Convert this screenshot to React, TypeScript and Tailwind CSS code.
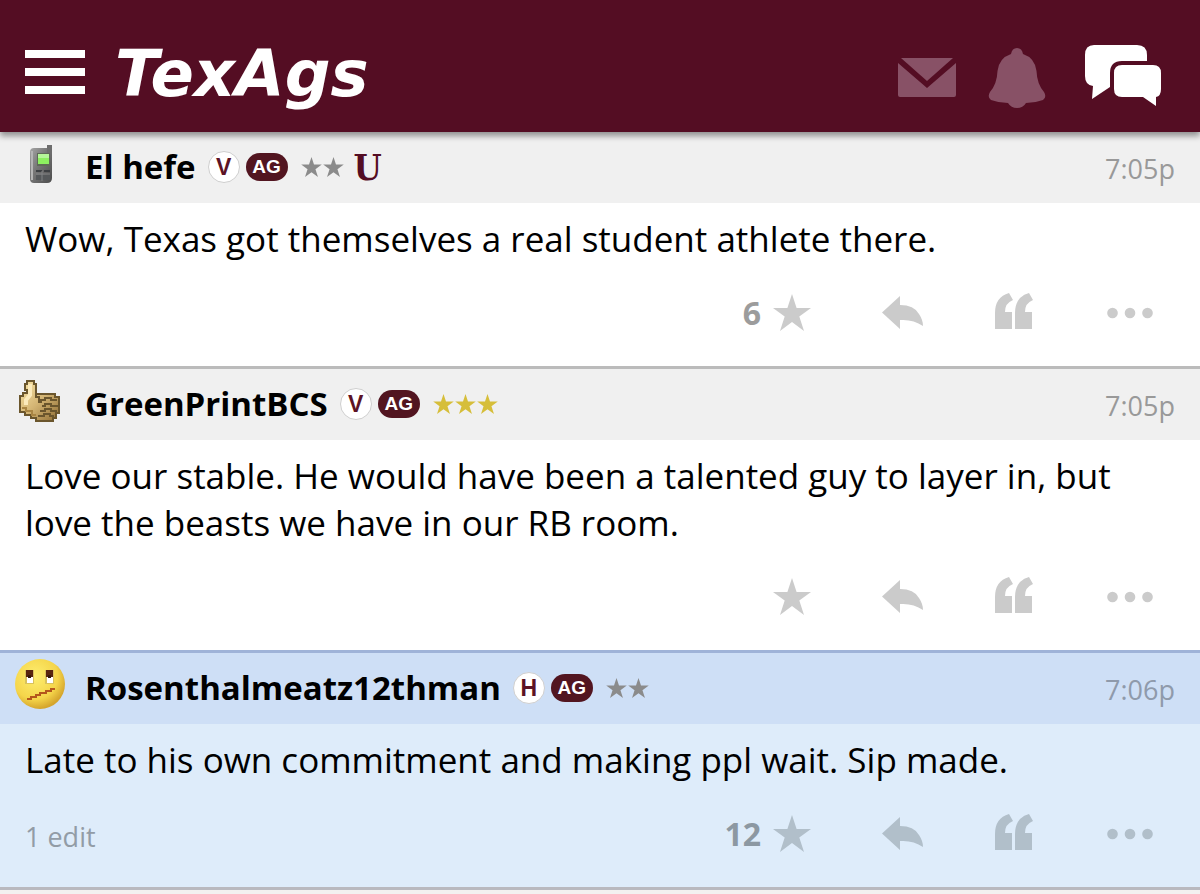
import { ReactNode } from "react";

interface PostProps {
    name: string;
    avatar: ReactNode;
    sport: string;
    stars: number;
    gold?: boolean;
    team?: boolean;
    time: string;
    text: string;
    likes?: number;
    edits?: string;
    highlighted?: boolean;
}

const PhoneIcon = () => (
    <svg width="52" height="52" viewBox="0 0 52 52" aria-hidden="true">
        <defs>
            <linearGradient id="phone" x1="0" x2="1" y1="0" y2="1">
                <stop offset="0" stopColor="#aaaaaa" />
                <stop offset="0.45" stopColor="#777777" />
                <stop offset="1" stopColor="#4c4c4c" />
            </linearGradient>
        </defs>
        <path d="M33 8h5v33q0 5-5 5H20q-4 0-4-4V15q0-4 4-4h13z" fill="url(#phone)" />
        <path d="M33 8h5v9h-5z" fill="#6d6d6d" />
        <path d="M18 14v29" stroke="#b5b5b5" strokeWidth="2" />
        <path d="M23 16h13v13H23z" fill="#5f6a58" />
        <path d="M24 17h11v10H24z" fill="#8df060" />
        <path d="M24 17h11v4H24z" fill="#b5f799" />
        <path d="M22 33h6v2h-6zM30 33h6v2h-6z" fill="#3d4043" />
        <path d="M22 38h14v5H22z" fill="#55585a" />
        <path d="M22 37h14M28 34v10" stroke="#808284" />
    </svg>
);

const ThumbIcon = () => (
    <svg width="52" height="52" viewBox="0 0 52 52" aria-hidden="true">
        <defs>
            <linearGradient id="thumb" x1="0" x2="1" y1="0" y2="1">
                <stop offset="0" stopColor="#fbe7a9" />
                <stop offset="0.5" stopColor="#d3b473" />
                <stop offset="1" stopColor="#8e6c33" />
            </linearGradient>
        </defs>
        <path d="M13 7h7v3h2v10h19v3h4v16h-3v5h-3v3H22v-3h-5v-3h-6v-3H6V22h3v-3h4v-3h-2v-6h2z" fill="url(#thumb)" stroke="#6b562d" strokeWidth="2" />
        <path d="M22 20v3h3v5h3M25 26h6v-2h6v2h6M28 32h3v-2h6v2h7M26 37h5v-2h6v2h6M24 42h6v-2h6v2h4" fill="none" stroke="#6b562d" strokeWidth="2" />
        <path d="M16 10v11l-4 5v5" fill="none" stroke="#fbeabb" strokeWidth="4" />
        <path d="M8 34h4v3h6v4h4" fill="none" stroke="#a98543" strokeWidth="2" />
    </svg>
);

const FaceIcon = () => (
    <svg width="52" height="52" viewBox="0 0 52 52" aria-hidden="true">
        <defs>
            <radialGradient id="face" cx="0.4" cy="0.35" r="0.65">
                <stop offset="0" stopColor="#fdee70" />
                <stop offset="0.7" stopColor="#f5d54a" />
                <stop offset="1" stopColor="#d5a52d" />
            </radialGradient>
        </defs>
        <circle cx="26" cy="26" r="25" fill="url(#face)" />
        <path d="M11 12h9v14h-9zM31 12h9v14h-9z" fill="#d9c25c" />
        <path d="M12 12h7v7h-7zM32 12h7v7h-7z" fill="#57240f" />
        <path d="M13 19h6v6h-6zM33 19h6v6h-6z" fill="#ffffff" />
        <path d="M14 17h3v3h-3zM34 17h3v3h-3z" fill="#34180b" />
        <path d="M13 41h4v-2h5v-2h4v-2h6v-2h5v-2h4" fill="none" stroke="#b4561c" strokeWidth="2" />
    </svg>
);

const Star = ({ className }: { className: string }) => (
    <svg viewBox="0 0 38 37" className={className} fill="currentColor" aria-hidden="true">
        <path d="M19 0l4.600 14H38L26.300 22.500 31 37l-12-9-12 9 4.700-14.500L0 14h14.400z" />
    </svg>
);

const Rating = ({ count, gold }: { count: number; gold?: boolean }) => (
    <span className={gold ? "ml-[13px] flex gap-px text-[#d6be3a]" : "ml-[13px] flex gap-px text-[#8b8b8b]"}>
        {Array.from({ length: count }, (_, i) => (
            <Star key={i} className="h-5 w-[21px]" />
        ))}
    </span>
);

const Header = () => (
    <header className="relative z-10 flex h-33 items-center bg-[#540d23] pt-3 pr-[38px] pl-[25px] shadow-[0_4px_6px_rgba(0,0,0,0.4)]">
        <button aria-label="Menu" className="flex w-[60px] flex-col gap-[10px]">
            <span className="h-2 bg-white" />
            <span className="h-2 bg-white" />
            <span className="h-2 bg-white" />
        </button>
        <a href="#" className="ml-[30px] pt-1 font-['DejaVu_Sans',sans-serif] text-[64px] leading-[70px] font-bold text-white italic">TexAgs</a>
        <nav className="ml-auto flex items-center pt-2">
            <button aria-label="Messages" className="pt-1">
                <svg width="58" height="40" viewBox="0 0 58 40" fill="#885166">
                    <path d="M3 0h52L29 23z" />
                    <path d="M0 5l29 25L58 5v32q0 2-2 2H2q-2 0-2-2z" />
                </svg>
            </button>
            <button aria-label="Notifications" className="ml-8 pt-1">
                <svg width="58" height="61" viewBox="0 0 58 61" fill="#885166">
                    <path d="M29 0q5 0 6 6 12 4 13.500 17Q49 36 56 44q3 5-1 8-8 3-17 3-3 5-9 5t-9-5q-9 0-17-3-4-3-1-8Q9 36 9.500 23 11 10 23 6q1-6 6-6z" />
                </svg>
            </button>
            <button aria-label="Forums" className="ml-[38px]">
                <svg width="78" height="62" viewBox="0 0 78 62" fill="#ffffff">
                    <path d="M10 0h43q10 0 10 10v6H38q-12 0-12 12v14L8 54l1-13q-8-1-8-10V10q0-10 9-10z" />
                    <path d="M38 20h31q8 0 8 8v16q0 7-5 8v9l-13-9H38q-8 0-8-8V28q0-8 8-8z" />
                </svg>
            </button>
        </nav>
    </header>
);

const Actions = ({ likes, highlighted }: { likes?: number; highlighted?: boolean }) => (
    <div className={highlighted ? "ml-auto flex items-center text-[#b1bfca]" : "ml-auto flex items-center text-[#cbcbcb]"}>
        <button aria-label="Like" className="flex items-center gap-3 pr-9">
            {likes && (
                <span className={highlighted ? "text-[32px] leading-10 font-bold text-[#8c98a2]" : "text-[32px] leading-10 font-bold text-[#9c9c9c]"}>{likes}</span>
            )}
            <Star className="mb-[2px] h-[37px] w-[38px]" />
        </button>
        <button aria-label="Reply" className="flex w-[112px] justify-center">
            <svg width="42" height="34" viewBox="0 0 42 34" fill="currentColor">
                <path d="M18 0v9q14 0 19 9 4 6 4 12Q31 23 18 24v9L0 16.500z" />
            </svg>
        </button>
        <button aria-label="Quote" className="flex w-[110px] justify-center pb-1">
            <svg width="38" height="36" viewBox="0 0 38 36" fill="currentColor">
                <path d="M14 0l4 7q-8 3-8 12h7v17H0V20Q0 4 14 0z" />
                <path d="M34 0l4 7q-8 3-8 12h7v17H20V20Q20 4 34 0z" />
            </svg>
        </button>
        <button aria-label="More" className="flex w-[122px] justify-center">
            <svg width="46" height="12" viewBox="0 0 46 12" fill="currentColor">
                <circle cx="5.500" cy="6" r="5.300" />
                <circle cx="23" cy="6" r="5.300" />
                <circle cx="40.500" cy="6" r="5.300" />
            </svg>
        </button>
    </div>
);

const Post = ({ name, avatar, sport, stars, gold, team, time, text, likes, edits, highlighted }: PostProps) => (
    <article className={highlighted ? "border-t-3 border-[#9fb3d8] bg-[#deecfa]" : "border-t-3 border-[#bbbbbb] bg-white first:border-t-0"}>
        <div className={highlighted ? "flex h-[71px] items-center bg-[#cedff6] pr-[25px] pb-px pl-[14px]" : "flex h-[71px] items-center bg-[#f0f0f0] pr-[25px] pb-px pl-[14px]"}>
            <span className="mb-2 w-[71px]">{avatar}</span>
            <h2 className="text-[33px] leading-11 font-bold">{name}</h2>
            <span className="ml-3 flex size-8 items-center justify-center rounded-full border border-[#cfcfcf] bg-white font-['Liberation_Sans',sans-serif] text-[23px] leading-6 font-bold text-[#5c1325]">{sport}</span>
            <span className="ml-[6px] flex h-7 w-[42px] items-center justify-center rounded-full bg-[#521520] font-['Liberation_Sans',sans-serif] text-[19px] leading-6 font-bold text-white">AG</span>
            <Rating count={stars} gold={gold} />
            {team && <span className="ml-[10px] font-['DejaVu_Serif_Condensed','DejaVu_Serif',serif] text-[36px] leading-8 font-bold text-[#540d23]">U</span>}
            <time className={highlighted ? "ml-auto pt-1 text-[27px] text-[#8f9aab]" : "ml-auto pt-1 text-[27px] text-[#999999]"}>{time}</time>
        </div>
        <p className="px-[25px] pt-3 text-[35px] leading-[47px]">{text}</p>
        <div className="flex h-[104px] items-center pr-[9px] pb-[2px] pl-[25px]">
            {edits && <span className="pt-[6px] text-[27px] text-[#929ca6]">{edits}</span>}
            <Actions likes={likes} highlighted={highlighted} />
        </div>
    </article>
);

export default function App() {
    return (
        <div className="min-h-screen bg-[#f3f1f0] font-['Open_Sans',sans-serif] text-black">
            <Header />
            <main className="border-b-3 border-[#b9b9bf]">
                <Post name="El hefe" avatar={<PhoneIcon />} sport="V" stars={2} team time="7:05p" text="Wow, Texas got themselves a real student athlete there." likes={6} />
                <Post name="GreenPrintBCS" avatar={<ThumbIcon />} sport="V" stars={3} gold time="7:05p" text="Love our stable. He would have been a talented guy to layer in, but love the beasts we have in our RB room." />
                <Post name="Rosenthalmeatz12thman" avatar={<FaceIcon />} sport="H" stars={2} time="7:06p" text="Late to his own commitment and making ppl wait. Sip made." likes={12} edits="1 edit" highlighted />
            </main>
        </div>
    );
}
